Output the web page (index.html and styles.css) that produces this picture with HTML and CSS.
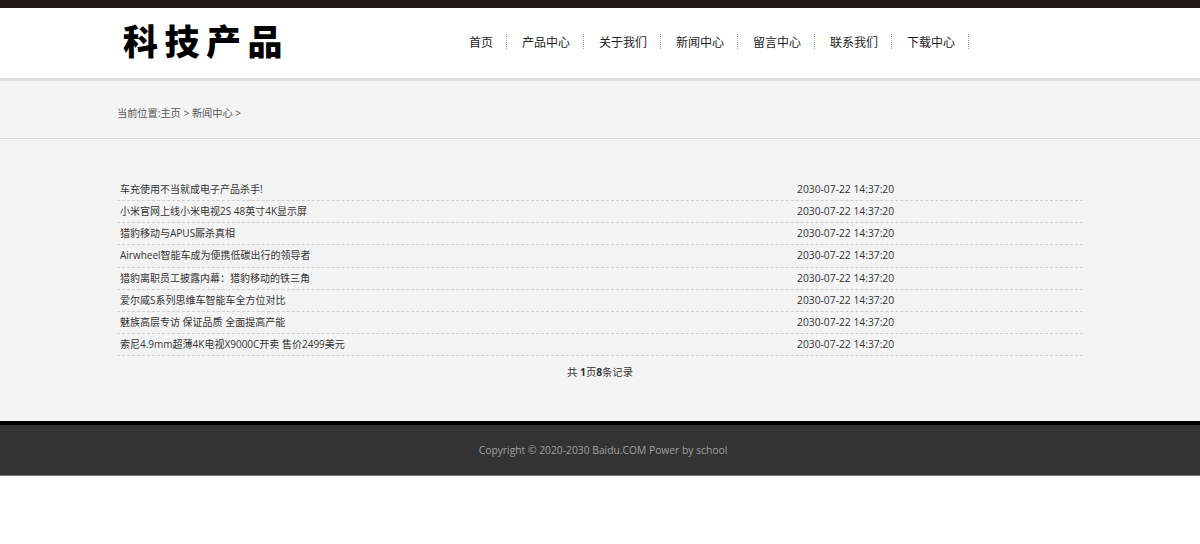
FILE: index.html
```html
<!DOCTYPE html>
<html lang="zh-CN">
<head>
<meta charset="utf-8">
<title>科技产品 - 新闻中心</title>
<link rel="stylesheet" href="styles.css">
</head>
<body>
<div class="topbar"></div>
<header class="header">
  <div class="container header-inner">
    <div class="logo">科技产品</div>
    <nav class="nav">
      <a class="nav-item">首页</a>
      <a class="nav-item">产品中心</a>
      <a class="nav-item">关于我们</a>
      <a class="nav-item">新闻中心</a>
      <a class="nav-item">留言中心</a>
      <a class="nav-item">联系我们</a>
      <a class="nav-item">下载中心</a>
    </nav>
  </div>
</header>
<main class="main">
  <div class="crumb-bar">
    <div class="container crumb">当前位置:主页 &gt; 新闻中心 &gt;</div>
  </div>
  <div class="container">
    <ul class="news">
      <li class="row"><span class="title">车充使用不当就成电子产品杀手!</span><span class="date">2030-07-22 14:37:20</span></li>
      <li class="row"><span class="title">小米官网上线小米电视2S 48英寸4K显示屏</span><span class="date">2030-07-22 14:37:20</span></li>
      <li class="row"><span class="title">猎豹移动与APUS厮杀真相</span><span class="date">2030-07-22 14:37:20</span></li>
      <li class="row"><span class="title">Airwheel智能车成为便携低碳出行的领导者</span><span class="date">2030-07-22 14:37:20</span></li>
      <li class="row"><span class="title">猎豹离职员工披露内幕：猎豹移动的铁三角</span><span class="date">2030-07-22 14:37:20</span></li>
      <li class="row"><span class="title">爱尔威S系列思维车智能车全方位对比</span><span class="date">2030-07-22 14:37:20</span></li>
      <li class="row"><span class="title">魅族高层专访 保证品质 全面提高产能</span><span class="date">2030-07-22 14:37:20</span></li>
      <li class="row"><span class="title">索尼4.9mm超薄4K电视X9000C开卖 售价2499美元</span><span class="date">2030-07-22 14:37:20</span></li>
    </ul>
    <div class="pager">共 <b>1</b>页<b>8</b>条记录</div>
  </div>
</main>
<footer class="footer">Copyright © 2020-2030 Baidu.COM Power by school</footer>
</body>
</html>
```

FILE: styles.css
```css
* { box-sizing: border-box; }
html, body { margin: 0; padding: 0; background: #fff; }
body {
  font-family: "Open Sans", "Noto Sans CJK SC", sans-serif;
  color: #333;
}
.container { width: 966px; margin: 0 auto; }

.topbar { height: 8px; background: #221918; }

.header {
  background: #fff;
  height: 73px;
  border-bottom: 3px solid #dedede;
}
.header-inner {
  display: flex;
  align-items: center;
  justify-content: space-between;
  height: 70px;
}
.logo {
  font-family: "Noto Sans CJK SC", sans-serif;
  font-weight: 900;
  font-size: 35px;
  letter-spacing: 6.5px;
  color: #000;
  margin-left: 6px;
  margin-top: -6px;
  line-height: 40px;
}
.nav {
  display: flex;
  align-items: center;
  margin-right: 114px;
  margin-top: -4px;
}
.nav-item {
  font-family: "Noto Sans CJK SC", sans-serif;
  font-size: 12px;
  line-height: 15px;
  color: #222;
  padding: 0 13px 0 15px;
  border-right: 1px dotted #999;
  text-decoration: none;
}

.main { background: #f4f4f4; padding-bottom: 38px; }
.crumb-bar { border-bottom: 1px solid #dcdcdc; padding: 22px 0 15px; }
.crumb {
  font-size: 10.2px;
  line-height: 20px;
  color: #555;
}

.news { list-style: none; margin: 40px 0 0; padding: 0; }
.row {
  display: grid;
  grid-template-columns: 677px 1fr;
  height: 22.15px;
  line-height: 21px;
  border-bottom: 1px dashed #cfcfcf;
  font-size: 10px;
  color: #333;
}
.title { padding-left: 3px; white-space: nowrap; }
.date { padding-left: 3px; font-size: 10.3px; }

.pager {
  text-align: center;
  font-size: 10.3px;
  line-height: 20px;
  margin-top: 6px;
  margin-bottom: 1px;
  color: #333;
}
.pager b { font-weight: 700; }

.footer {
  background: #333;
  border-top: 4px solid #000;
  border-bottom: 1px solid #777;
  height: 55px;
  line-height: 50px;
  text-align: center;
  font-size: 10.3px;
  color: #a0a0a0;
  padding-left: 6px;
}
```
